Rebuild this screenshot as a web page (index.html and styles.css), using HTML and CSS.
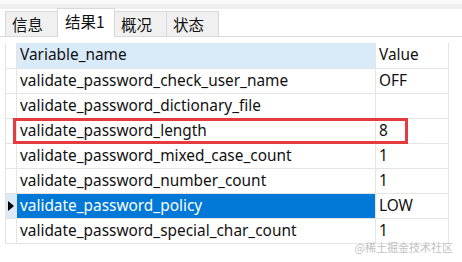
FILE: index.html
```html
<!DOCTYPE html>
<html lang="zh-CN">
<head>
  <meta charset="UTF-8" />
  <title>结果1</title>
  <link rel="stylesheet" href="styles.css">
</head>
<body>
  <div class="titlebar"></div>

  <div class="tabs">
    <div class="tab">信息</div>
    <div class="tab active">结果1</div>
    <div class="tab">概况</div>
    <div class="tab">状态</div>
  </div>

  <div class="grid-wrap">
    <table class="grid">
      <colgroup>
        <col class="col-ind">
        <col class="col-name">
        <col class="col-value">
      </colgroup>
      <thead>
        <tr>
          <th class="ind"></th>
          <th class="name sorted">Variable_name</th>
          <th class="value">Value</th>
        </tr>
      </thead>
      <tbody>
        <tr>
          <td class="ind"></td>
          <td class="name">validate_password_check_user_name</td>
          <td class="value">OFF</td>
        </tr>
        <tr>
          <td class="ind"></td>
          <td class="name">validate_password_dictionary_file</td>
          <td class="value"></td>
        </tr>
        <tr>
          <td class="ind"></td>
          <td class="name">validate_password_length</td>
          <td class="value">8</td>
        </tr>
        <tr>
          <td class="ind"></td>
          <td class="name">validate_password_mixed_case_count</td>
          <td class="value">1</td>
        </tr>
        <tr>
          <td class="ind"></td>
          <td class="name">validate_password_number_count</td>
          <td class="value">1</td>
        </tr>
        <tr class="current">
          <td class="ind">
            <svg width="6" height="10" viewBox="0 0 6 10"><path d="M0 0 L6 5 L0 10 Z" fill="#000"/></svg>
          </td>
          <td class="name">validate_password_policy</td>
          <td class="value">LOW</td>
        </tr>
        <tr>
          <td class="ind"></td>
          <td class="name">validate_password_special_char_count</td>
          <td class="value">1</td>
        </tr>
      </tbody>
    </table>

    <!-- 红框标注 -->
    <div class="mark"></div>
  </div>

  <div class="watermark">@稀土掘金技术社区</div>
</body>
</html>
```

FILE: styles.css
```css
* {
  box-sizing: border-box;
}

body {
  margin: 0;
  padding: 0;
  background: #fff;
  font-family: "Noto Sans", "Noto Sans CJK SC", sans-serif;
  font-size: 15.4px;
  color: #111;
  width: 462px;
  height: 262px;
  position: relative;
  overflow: hidden;
}

.titlebar {
  height: 9px;
  background: #f9f9f9;
  border-bottom: 5px solid #efefef;
}

.tabs {
  height: 28px;
  display: flex;
  align-items: flex-end;
  padding-left: 5px;
  border-bottom: 1px solid #dadada;
}

.tab {
  width: 53px;
  height: 25px;
  margin-right: -1px;
  padding-left: 6px;
  background: #f0f0f0;
  border: 1px solid #d9d9d9;
  border-bottom: none;
  line-height: 25px;
  font-size: 15.5px;
  font-family: "Noto Sans CJK SC", sans-serif;
}

.tab.active {
  width: 58px;
  height: 29px;
  margin-bottom: -1px;
  background: #fff;
  line-height: 25px;
  padding-left: 7px;
  position: relative;
}

.grid-wrap {
  position: relative;
  margin: 6px 0 0 5px;
  width: 443px;
}

.grid {
  border-collapse: collapse;
  table-layout: fixed;
  width: 443px;
}

.col-ind {
  width: 11px;
}

.col-name {
  width: 359px;
}

.col-value {
  width: 73px;
}

.grid th,
.grid td {
  height: 25px;
  padding: 0 0 0 3px;
  border: 1px solid #e4e4e4;
  text-align: left;
  font-weight: 400;
  white-space: nowrap;
  overflow: hidden;
  line-height: 22px;
}

.grid thead th {
  border-top: none;
}

.grid th.sorted {
  background: #d9eaf9;
}

.grid .ind {
  padding: 0;
}

.current .ind {
  background: #dceaf7;
  padding-left: 2px;
}

.current .ind svg {
  display: block;
}

.current .name {
  background: #0078d7;
  color: #fff;
}

.mark {
  position: absolute;
  left: 8px;
  top: 75px;
  width: 395px;
  height: 26px;
  border: 3px solid #e53a3e;
}

.watermark {
  position: absolute;
  right: 9px;
  bottom: 7px;
  font-size: 11px;
  color: #c2c2c2;
  font-family: "Noto Sans CJK SC", sans-serif;
}
```
